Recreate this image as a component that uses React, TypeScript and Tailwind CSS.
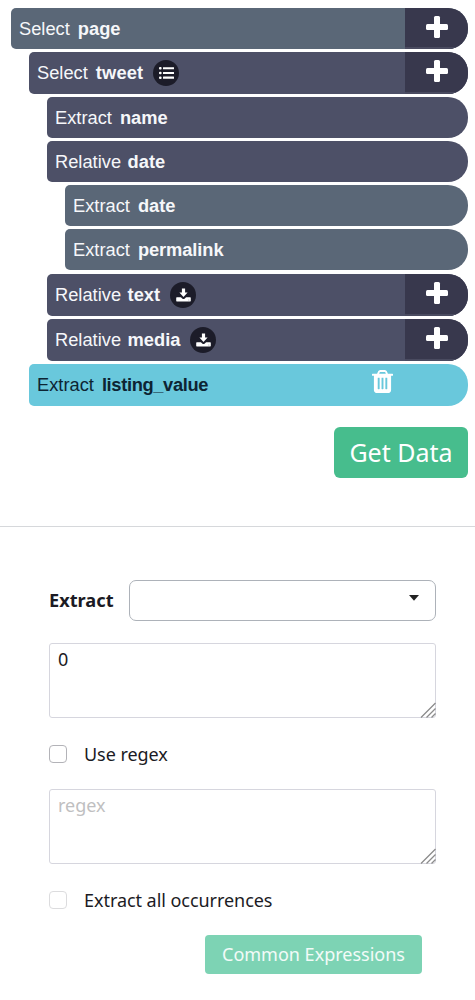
import type { ReactNode } from 'react';

type BadgeKind = 'list' | 'download';

interface Command {
  verb: string;
  name: string;
  box: string;
  nameClass?: string;
  badge?: BadgeKind;
  canAdd?: boolean;
  canDelete?: boolean;
}

const commands: Command[] = [
  { verb: 'Select', name: 'page', box: 'ml-[11px] h-[41px] bg-[#5a6777]', canAdd: true },
  { verb: 'Select', name: 'tweet', box: 'ml-[29px] mt-[3px] h-[42px] bg-[#4d5067]', nameClass: 'ml-[8px] tracking-[0.15px]', badge: 'list', canAdd: true },
  { verb: 'Extract', name: 'name', box: 'ml-[47px] mt-[3px] h-[41px] bg-[#4d5067]' },
  { verb: 'Relative', name: 'date', box: 'ml-[47px] mt-[3px] h-[41px] bg-[#4d5067]', nameClass: 'ml-[6.5px]' },
  { verb: 'Extract', name: 'date', box: 'ml-[65px] mt-[3px] h-[41px] bg-[#5a6777]' },
  { verb: 'Extract', name: 'permalink', box: 'ml-[65px] mt-[3px] h-[41px] bg-[#5a6777]', nameClass: 'ml-[8px] tracking-[-0.08px]' },
  { verb: 'Relative', name: 'text', box: 'ml-[47px] mt-[4px] h-[42px] bg-[#4d5067]', nameClass: 'ml-[6.5px]', badge: 'download', canAdd: true },
  { verb: 'Relative', name: 'media', box: 'ml-[47px] mt-[3px] h-[42px] bg-[#4d5067]', nameClass: 'ml-[6.5px]', badge: 'download', canAdd: true },
  { verb: 'Extract', name: 'listing_value', box: 'ml-[29px] mt-[3px] h-[42px] bg-[#69c8dc]', nameClass: 'ml-[8px] tracking-[-0.35px]', canDelete: true },
];

function PlusIcon() {
  return (
    <svg viewBox="0 0 22 22" className="size-[22px] fill-white">
      <rect x="0" y="8" width="22" height="6" rx="1.5" />
      <rect x="8" y="0" width="6" height="22" rx="1.5" />
    </svg>
  );
}

function TrashIcon() {
  return (
    <svg viewBox="192 128 1408 1536" className="h-[23px] w-[21px] fill-white">
      <path d="M704 1376v-704q0-14-9-23t-23-9h-64q-14 0-23 9t-9 23v704q0 14 9 23t23 9h64q14 0 23-9t9-23zm256 0v-704q0-14-9-23t-23-9h-64q-14 0-23 9t-9 23v704q0 14 9 23t23 9h64q14 0 23-9t9-23zm256 0v-704q0-14-9-23t-23-9h-64q-14 0-23 9t-9 23v704q0 14 9 23t23 9h64q14 0 23-9t9-23zm-544-992h448l-48-117q-7-9-17-11h-317q-10 2-17 11zm928 32v64q0 14-9 23t-23 9h-96v948q0 83-47 143.5t-113 60.5h-832q-66 0-113-58.5t-47-141.5v-952h-96q-14 0-23-9t-9-23v-64q0-14 9-23t23-9h309l70-167q15-37 54-63t79-26h320q40 0 79 26t54 63l70 167h309q14 0 23 9t9 23z" />
    </svg>
  );
}

function Badge({ kind }: { kind: BadgeKind }) {
  return (
    <span className="ml-[10px] flex size-[26px] items-center justify-center rounded-full bg-[#1c1c29]">
      {kind === 'list' ? (
        <svg viewBox="0 0 15 12" className="h-3 w-[15px] fill-white">
          <rect x="0" y="0" width="2.6" height="2.6" rx="1" />
          <rect x="0" y="4.7" width="2.6" height="2.6" rx="1" />
          <rect x="0" y="9.4" width="2.6" height="2.6" rx="1" />
          <rect x="4" y="0.2" width="11" height="2.1" rx="0.3" />
          <rect x="4" y="4.9" width="11" height="2.1" rx="0.3" />
          <rect x="4" y="9.6" width="11" height="2.1" rx="0.3" />
        </svg>
      ) : (
        <svg viewBox="0 0 15 14" className="mb-px h-[14px] w-[15px] fill-white">
          <path d="M5.900.4h3.200v4.200h2.500L7.500 9 3.400 4.600h2.500z" />
          <path d="M.8 9.200h4.100L6.500 10.700q1 .8 2 0L10.100 9.200h4.100q.6 0 .6.700v2.800q0 .7-.6.700H.8q-.6 0-.6-.7V9.900q0-.7.600-.7z" />
          <circle cx="12.900" cy="12" r=".45" className="fill-[#55556a]" />
        </svg>
      )}
    </span>
  );
}

function CommandRow({ command }: { command: Command }) {
  const { verb, name, box, nameClass = 'ml-[8px]', badge, canAdd, canDelete } = command;
  return (
    <div
      className={`flex items-center overflow-hidden rounded-l-[5px] rounded-r-[20px] pl-2 text-[18.3px] ${
        canDelete ? 'text-[#0d2433]' : 'text-[#f6f7fa]'
      } ${box}`}
    >
      <span>{verb}</span>
      <b className={nameClass}>{name}</b>
      {badge && <Badge kind={badge} />}
      {canAdd && (
        <button type="button" className="ml-auto flex h-full w-[63px] flex-col items-center bg-[#38384d] pt-2 shadow-[inset_0_-2px_0_#4a4b60]">
          <PlusIcon />
        </button>
      )}
      {canDelete && (
        <button type="button" className="mr-[75px] mb-[7px] ml-auto">
          <TrashIcon />
        </button>
      )}
    </div>
  );
}

function ResizableArea({ children }: { children: ReactNode }) {
  return (
    <div className="relative h-[75px]">
      {children}
      <svg viewBox="0 0 16 16" className="absolute right-0 bottom-0 size-4 stroke-[#8c8c8c]" strokeWidth="1.3">
        <path d="M1 15.500 15.500 1M6.500 15.500l9-9M11.500 15.500l4-4" />
      </svg>
    </div>
  );
}

const areaClass =
  'block h-full w-full resize-none rounded-[3px] border border-[#d6d6de] bg-white px-2 pt-[3px] text-[18px] leading-[25px] outline-none placeholder:text-[#bfbfc1]';

export default function App() {
  return (
    <div className="h-[1000px] w-[475px] overflow-hidden bg-white font-['Noto_Sans',sans-serif] text-[#1b1b24]">
      <section className="h-[527px] border-b border-[#d6d8db] pt-2">
        <div className="mr-[7px] font-['Liberation_Sans',Arial,sans-serif]">
          {commands.map((command) => (
            <CommandRow key={`${command.verb}-${command.name}`} command={command} />
          ))}
        </div>
        <div className="mt-[21px] mr-[7px] flex justify-end">
          <button type="button" className="h-[51px] w-[134px] rounded-[6px] bg-[#47bd8d] text-[25px] whitespace-nowrap text-white">
            Get Data
          </button>
        </div>
      </section>

      <section className="pt-[53px] pr-[39px] pl-[49px] text-[18px]">
        <div className="flex h-[41px] items-center justify-between">
          <b className="text-[18.2px]">Extract</b>
          <button
            type="button"
            aria-label="Extract type"
            className="flex h-[41px] w-[307px] justify-end rounded-[7px] border border-[#adb2b9] bg-white pt-[14px] pr-4"
          >
            <svg viewBox="0 0 10 6" className="h-[6px] w-[10px] fill-[#222]">
              <path d="M0 0h10L5 5.800z" />
            </svg>
          </button>
        </div>

        <div className="mt-[22px]">
          <ResizableArea>
            <textarea className={areaClass} defaultValue="0" />
          </ResizableArea>
        </div>

        <label className="mt-[23px] flex h-[26px] items-center">
          <input type="checkbox" className="size-[18px] appearance-none rounded-[4px] border border-[#b3b3b8] bg-white" />
          <span className="ml-[17px] tracking-[-0.05px]">Use regex</span>
        </label>

        <div className="mt-[22px]">
          <ResizableArea>
            <textarea className={areaClass} placeholder="regex" />
          </ResizableArea>
        </div>

        <label className="mt-[23px] flex h-[26px] items-center">
          <input type="checkbox" disabled className="size-[18px] appearance-none rounded-[4px] border border-[#dcdcde] bg-white" />
          <span className="ml-[17px] tracking-[-0.05px]">Extract all occurrences</span>
        </label>

        <div className="mt-[22px] mr-[14px] flex justify-end">
          <button type="button" disabled className="h-[39px] w-[217px] rounded-[4px] bg-[#7dd3b4] whitespace-nowrap text-white/90">
            Common Expressions
          </button>
        </div>
      </section>
    </div>
  );
}
